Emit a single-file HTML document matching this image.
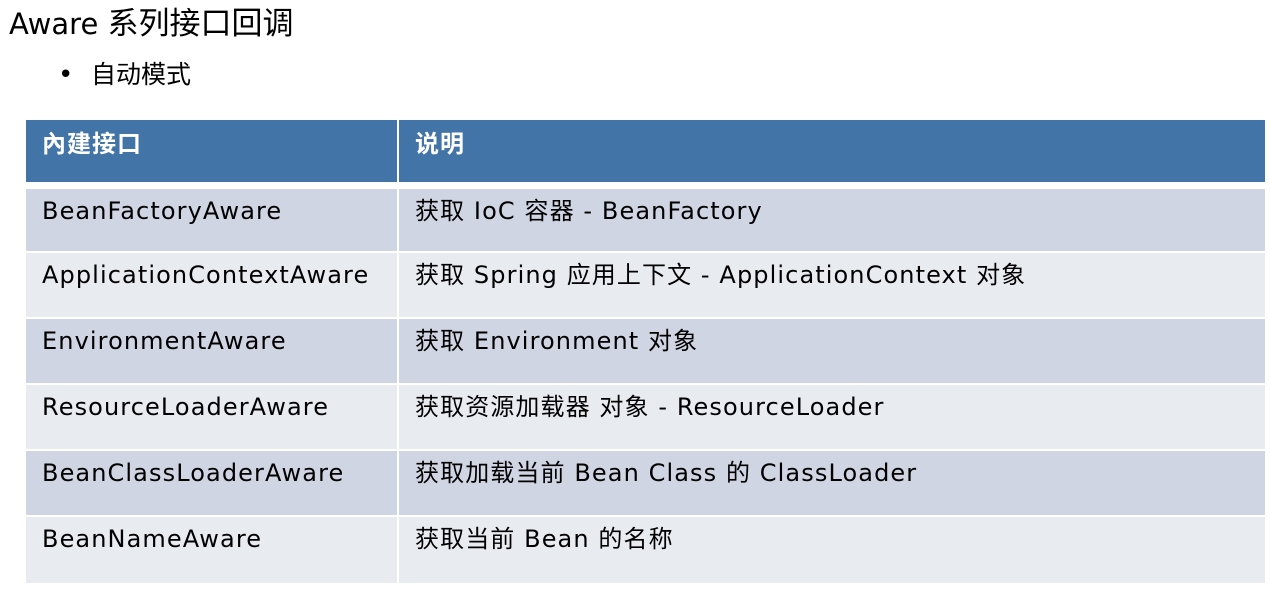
<!DOCTYPE html>
<html><head><meta charset="utf-8"><style>
body{margin:0;width:1270px;height:592px;background:#fff;font-family:"DejaVu Sans","Noto Sans CJK SC",sans-serif;color:#000;position:relative;overflow:hidden}
.t{position:absolute;left:9px;top:1px;font-size:29px;line-height:40px;font-family:"DejaVu Sans","Noto Sans CJK SC",sans-serif}
.t .z{font-family:"Noto Sans CJK SC",sans-serif;font-size:31px}
.b{position:absolute;left:58px;top:56px;font-size:25px;line-height:34px;font-family:"Noto Sans CJK SC",sans-serif}
.b span{display:inline-block;width:33px;font-size:26px;font-family:"DejaVu Sans",sans-serif}
.row{position:absolute;left:26px;width:1239px;height:62px}
.c{position:absolute;top:0;height:100%;font-size:24px;letter-spacing:1.1px;line-height:30px;padding-top:7px;box-sizing:border-box;white-space:nowrap}
.c1{left:0;width:371px;padding-left:16px}
.c2{left:373px;right:0;padding-left:16px}
.h .c{background:#4274a8;color:#fff;font-weight:bold;font-size:24px;letter-spacing:1px;padding-top:7px;font-family:"Noto Sans CJK SC",sans-serif}
.o .c{background:#cfd5e2}
.e .c{background:#e8ebf0}
</style></head><body>
<div class="t">Aware <span class="z">系列接口回调</span></div>
<div class="b"><span>•</span>自动模式</div>
<div class="row h" style="top:120px;height:62px"><div class="c c1">內建接口</div><div class="c c2">说明</div></div>
<div class="row o" style="top:189px;height:62px"><div class="c c1">BeanFactoryAware</div><div class="c c2">获取 IoC 容器 - BeanFactory</div></div>
<div class="row e" style="top:253px;height:64px"><div class="c c1">ApplicationContextAware</div><div class="c c2">获取 Spring 应用上下文 - ApplicationContext 对象</div></div>
<div class="row o" style="top:319px;height:64px"><div class="c c1">EnvironmentAware</div><div class="c c2">获取 Environment 对象</div></div>
<div class="row e" style="top:385px;height:64px"><div class="c c1">ResourceLoaderAware</div><div class="c c2">获取资源加载器 对象 - ResourceLoader</div></div>
<div class="row o" style="top:451px;height:64px"><div class="c c1">BeanClassLoaderAware</div><div class="c c2">获取加载当前 Bean Class 的 ClassLoader</div></div>
<div class="row e" style="top:517px;height:66px"><div class="c c1">BeanNameAware</div><div class="c c2">获取当前 Bean 的名称</div></div>
</body></html>
